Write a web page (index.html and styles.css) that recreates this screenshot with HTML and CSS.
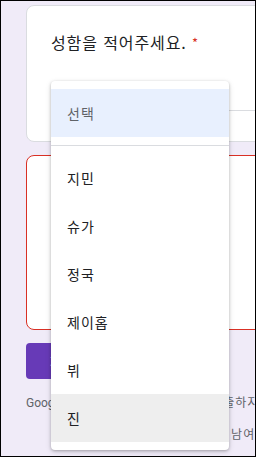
FILE: index.html
```html
<!DOCTYPE html>
<html lang="ko">
<head>
  <meta charset="UTF-8" />
  <meta name="viewport" content="width=device-width, initial-scale=1.0" />
  <title>설문지</title>
  <link rel="stylesheet" href="styles.css">
</head>
<body>
  <div class="frame">
    <div class="card question-card">
      <p class="question-title">성함을 적어주세요. <span class="required">*</span></p>
      <div class="select-line"></div>
    </div>
    <div class="card error-card"></div>
    <button class="submit-button">제출</button>
    <div class="footer">
      <p class="footer-note">Google <span class="ko">설문지를 통해 비밀번호를 제출하지 마세요.</span></p>
      <p class="footer-note second"><span class="ko">이 콘텐츠는</span> Google<span class="ko">이 승인 남여</span></p>
    </div>

    <!-- open dropdown list -->
    <ul class="dropdown">
      <li class="option placeholder">선택</li>
      <li class="divider"></li>
      <li class="option">지민</li>
      <li class="option">슈가</li>
      <li class="option">정국</li>
      <li class="option">제이홉</li>
      <li class="option">뷔</li>
      <li class="option hover">진</li>
    </ul>
  </div>
</body>
</html>
```

FILE: styles.css
```css
body {
  margin: 0;
  padding: 0;
  font-family: Roboto, 'Noto Sans CJK KR', sans-serif;
  color: #202124;
}
.frame {
  position: relative;
  width: 256px;
  height: 457px;
  box-sizing: border-box;
  border: 1px solid #000;
  background-color: #f0ebf8;
  padding: 4px 0 0 25px;
  overflow: hidden;
}
.card {
  width: 260px;
  box-sizing: border-box;
  background-color: #fff;
  border: 1px solid #dadce0;
  border-radius: 8px;
}
.question-card {
  height: 137px;
  padding: 24px 0 0 24px;
}
.question-title {
  margin: 0;
  font-family: 'Noto Sans CJK KR', sans-serif;
  font-size: 16px;
  line-height: 24px;
  letter-spacing: 0.9px;
}
.required {
  color: #d93025;
  font-size: 13px;
  vertical-align: 1px;
}
.select-line {
  margin-top: 55px;
  height: 1px;
  background-color: #dadce0;
}
.error-card {
  margin-top: 13px;
  height: 175px;
  border-color: #d93025;
}
.submit-button {
  display: block;
  margin-top: 13px;
  height: 36px;
  padding: 0 24px;
  border: none;
  border-radius: 4px;
  background-color: #673ab7;
  color: #fff;
  font-family: 'Noto Sans CJK KR', sans-serif;
  font-size: 14px;
}
.footer {
  margin-top: 16px;
}
.footer-note {
  margin: 0;
  font-size: 12px;
  line-height: 16px;
  color: #5f6368;
  white-space: nowrap;
}
.footer-note .ko {
  letter-spacing: 1px;
}
.footer-note.second {
  margin-top: 16px;
  padding-left: 56px;
}
.dropdown {
  position: absolute;
  left: 50px;
  top: 80px;
  width: 178px;
  margin: 0;
  padding: 8px 0;
  list-style: none;
  background-color: #fff;
  border-radius: 4px;
  box-shadow: 0 1px 3px rgba(0, 0, 0, 0.25), 0 2px 6px rgba(0, 0, 0, 0.12);
}
.option {
  height: 48px;
  line-height: 48px;
  padding-left: 16px;
  font-family: 'Noto Sans CJK KR', sans-serif;
  font-size: 14px;
  letter-spacing: 1px;
  color: #202124;
}
.option.placeholder {
  background-color: #e8f0fe;
  color: #5f6368;
}
.option.hover {
  background-color: #eeeeee;
}
.divider {
  height: 1px;
  margin: 8px 0;
  background-color: #dadce0;
}
```
